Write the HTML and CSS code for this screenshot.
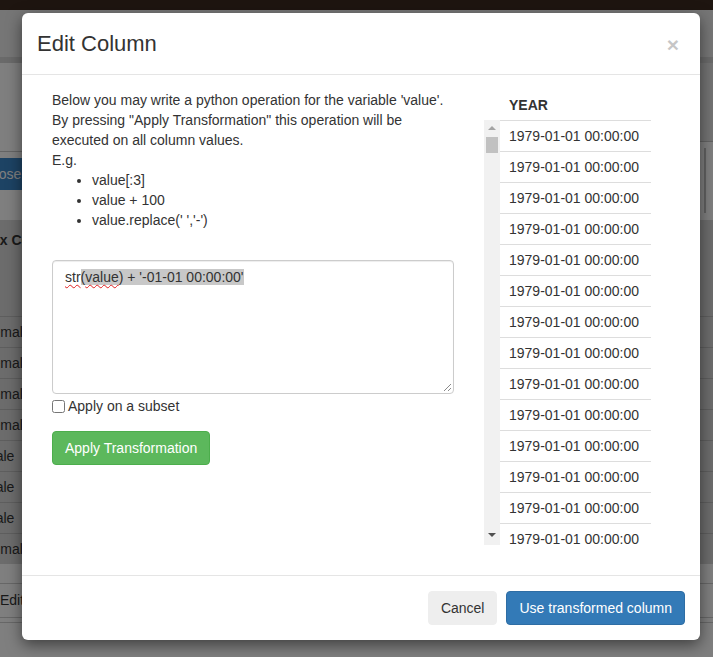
FILE: index.html
```html
<!DOCTYPE html>
<html>
<head>
<meta charset="utf-8">
<title>Edit Column</title>
<link rel="stylesheet" href="styles.css">
</head>
<body>
<div class="page">
  <div class="topbar"></div>
  <div class="navbar"></div>
  <div class="toolbar">
    <div class="tool-left">
      <div class="tool-left-top"></div>
      <button class="bg-btn">Choose file</button>
    </div>
    <div class="tool-right">
      <div class="tool-right-top"></div>
      <div class="vbar"></div>
    </div>
  </div>
  <div class="panel">
    <div class="panel-title">Index Column</div>
    <div class="bg-table">
      <div class="bg-row"><span class="bg-cell">Female</span></div>
      <div class="bg-row"><span class="bg-cell">Female</span></div>
      <div class="bg-row"><span class="bg-cell">Female</span></div>
      <div class="bg-row"><span class="bg-cell">Female</span></div>
      <div class="bg-row"><span class="bg-cell">Male</span></div>
      <div class="bg-row"><span class="bg-cell">Male</span></div>
      <div class="bg-row"><span class="bg-cell">Male</span></div>
      <div class="bg-row"><span class="bg-cell">Female</span></div>
    </div>
  </div>
  <div class="bg-footer"><span class="bg-edit">Edit</span></div>
  <div class="bg-line"></div>
</div>
<div class="backdrop"></div>

<div class="modal">
  <div class="modal-header">
    <h4 class="modal-title">Edit Column</h4>
    <button class="close" type="button">&times;</button>
  </div>
  <div class="modal-body">
    <div class="col-left">
      <p class="help">Below you may write a python operation for the variable 'value'.<br>By pressing "Apply Transformation" this operation will be executed on all column values.<br>E.g.</p>
      <ul class="examples">
        <li>value[:3]</li>
        <li>value + 100</li>
        <li>value.replace(' ','-')</li>
      </ul>
      <div class="editor"><span class="spell">str</span><span class="sel">(<span class="spell">value</span>) + '-01-01 00:00:00'</span><svg class="grip" width="10" height="10" viewBox="0 0 10 10"><line x1="9" y1="2" x2="2" y2="9" stroke="#8a8a8a" stroke-width="1"/><line x1="9" y1="6" x2="6" y2="9" stroke="#8a8a8a" stroke-width="1"/></svg></div>
      <label class="subset"><input type="checkbox" class="subset-box">Apply on a subset</label>
      <button class="btn btn-success" type="button">Apply Transformation</button>
    </div>
    <div class="col-right">
      <div class="th">YEAR</div>
      <div class="scroller">
        <div class="sbar">
          <span class="sbtn"><span class="arrow-up"></span></span>
          <span class="thumb"></span>
          <span class="strack"></span>
          <span class="sbtn"><span class="arrow-down"></span></span>
        </div>
        <div class="rows">
          <div class="td">1979-01-01 00:00:00</div>
          <div class="td">1979-01-01 00:00:00</div>
          <div class="td">1979-01-01 00:00:00</div>
          <div class="td">1979-01-01 00:00:00</div>
          <div class="td">1979-01-01 00:00:00</div>
          <div class="td">1979-01-01 00:00:00</div>
          <div class="td">1979-01-01 00:00:00</div>
          <div class="td">1979-01-01 00:00:00</div>
          <div class="td">1979-01-01 00:00:00</div>
          <div class="td">1979-01-01 00:00:00</div>
          <div class="td">1979-01-01 00:00:00</div>
          <div class="td">1979-01-01 00:00:00</div>
          <div class="td">1979-01-01 00:00:00</div>
          <div class="td">1979-01-01 00:00:00</div>
          <div class="td">1979-01-01 00:00:00</div>
        </div>
      </div>
    </div>
  </div>
  <div class="modal-footer">
    <button class="btn btn-default" type="button">Cancel</button>
    <button class="btn btn-primary" type="button">Use transformed column</button>
  </div>
</div>
</body>
</html>
```

FILE: styles.css
```css
* { box-sizing: border-box; }

html, body {
  margin: 0;
  padding: 0;
}

body {
  position: relative;
  width: 713px;
  height: 657px;
  overflow: hidden;
  font-family: "Liberation Sans", Arial, Helvetica, sans-serif;
  font-size: 14px;
  line-height: 20px;
  color: #333;
  background: #fff;
}

/* ---------- background page ---------- */
.page {
  width: 713px;
  height: 657px;
  overflow: hidden;
}

.topbar {
  height: 10px;
  background: #3c2a20;
}

.navbar {
  height: 53px;
  background: #ececec;
  border-bottom: 6px solid #d4d4d4;
}

.toolbar {
  display: flex;
  justify-content: space-between;
  height: 157px;
}

.tool-left {
  width: 80px;
  margin-left: -40px;
}

.tool-left-top {
  height: 89px;
  border-bottom: 1px solid #c8c8c8;
}

.bg-btn {
  display: block;
  margin-top: 6px;
  width: 140px;
  height: 32px;
  padding: 0 13px;
  border: 0;
  background: #3a86c8;
  color: #fff;
  text-align: left;
  font: 14px/32px "Liberation Sans", Arial, sans-serif;
}

.tool-right {
  width: 13px;
}

.tool-right-top {
  height: 79px;
  background: #e6e6e6;
  border-bottom: 1px solid #c4c4c4;
}

.vbar {
  width: 2px;
  height: 65px;
  margin: 6px 0 0 4px;
  background: #c2c2c2;
}

.panel {
  height: 344px;
  background: #d8d8d8;
}

.panel-title {
  padding-top: 10px;
  margin-left: -29px;
  font-weight: bold;
  color: #333;
}

.bg-table {
  margin-top: 66px;
}

.bg-row {
  height: 31px;
  border-top: 1px solid #bcbcbc;
  line-height: 30px;
}

.bg-cell {
  display: inline-block;
  margin-left: -16px;
}

.bg-footer {
  margin-top: 19px;
  height: 35px;
  border-top: 1px solid #cfcfcf;
  border-bottom: 1px solid #cfcfcf;
  line-height: 33px;
}

.bg-line {
  margin-top: 4px;
  border-top: 1px solid #cfcfcf;
}

.backdrop {
  position: absolute;
  inset: 0;
  background: rgba(0, 0, 0, 0.5);
}

/* ---------- modal ---------- */
.modal {
  position: absolute;
  left: 22px;
  top: 13px;
  width: 678px;
  background: #fff;
  border-radius: 6px;
  box-shadow: 0 5px 15px rgba(0, 0, 0, 0.5);
}

.modal-header {
  display: flex;
  align-items: center;
  justify-content: space-between;
  padding: 15px;
  border-bottom: 1px solid #e5e5e5;
}

.modal-title {
  margin: 0;
  font-size: 22px;
  line-height: 31px;
  font-weight: normal;
  color: #333;
}

.close {
  margin: 2px 6px 0 0;
  padding: 0;
  border: 0;
  background: transparent;
  font-family: "Liberation Sans", Arial, sans-serif;
  font-size: 21px;
  font-weight: bold;
  line-height: 1;
  color: #000;
  opacity: 0.22;
}

.modal-body {
  display: flex;
  gap: 30px;
  padding: 15px 49px 30px 30px;
}

.col-left {
  width: 402px;
  flex: 0 0 402px;
}

.help {
  margin: 0;
}

.examples {
  margin: 0 0 30px;
  padding-left: 40px;
}

.editor {
  position: relative;
  height: 134px;
  padding: 6px 12px;
  border: 1px solid #ccc;
  border-radius: 4px;
  box-shadow: inset 0 1px 1px rgba(0, 0, 0, 0.075);
  white-space: pre;
  color: #333;
}

.sel {
  background: #c8c8c8;
}

.spell {
  text-decoration: underline wavy #e02020;
  text-decoration-thickness: 1px;
  text-underline-offset: 2px;
  text-decoration-skip-ink: none;
}

.grip {
  position: absolute;
  right: 1px;
  bottom: 1px;
}

.subset {
  display: flex;
  align-items: center;
  height: 20px;
  margin-top: 2px;
}

.subset-box {
  width: 13px;
  height: 13px;
  margin: 0 3px 0 0;
}

.btn {
  display: inline-block;
  padding: 6px 12px;
  border: 1px solid transparent;
  border-radius: 4px;
  font-family: "Liberation Sans", Arial, sans-serif;
  font-size: 14px;
  line-height: 20px;
  white-space: nowrap;
}

.btn-success {
  margin-top: 15px;
  background: #5cb85c;
  border-color: #4cae4c;
  color: #fff;
}

.btn-default {
  background: #eeeeee;
  border-color: #eeeeee;
  color: #333;
}

.btn-primary {
  background: #337ab7;
  border-color: #2e6da4;
  color: #fff;
}

.col-right {
  width: 167px;
  flex: 0 0 167px;
}

.th {
  padding: 5px 8px 5px 25px;
  font-weight: bold;
}

.scroller {
  display: flex;
  height: 425px;
  overflow: hidden;
}

.sbar {
  display: flex;
  flex-direction: column;
  width: 16px;
  flex: 0 0 16px;
  background: #f1f1f1;
}

.sbtn {
  display: flex;
  align-items: center;
  justify-content: center;
  height: 16px;
}

.arrow-up {
  width: 0;
  height: 0;
  border-left: 4px solid transparent;
  border-right: 4px solid transparent;
  border-bottom: 4px solid #a3a3a3;
}

.arrow-down {
  width: 0;
  height: 0;
  margin-top: -4px;
  border-left: 4px solid transparent;
  border-right: 4px solid transparent;
  border-top: 4px solid #505050;
}

.thumb {
  height: 16px;
  margin: 1px 2px 0;
  background: #c1c1c1;
}

.strack {
  flex: 1;
}

.rows {
  flex: 1;
}

.td {
  height: 31px;
  padding: 5px 9px;
  border-top: 1px solid #ddd;
  white-space: nowrap;
}

.modal-footer {
  display: flex;
  justify-content: flex-end;
  gap: 9px;
  padding: 15px;
  border-top: 1px solid #e5e5e5;
}
```
